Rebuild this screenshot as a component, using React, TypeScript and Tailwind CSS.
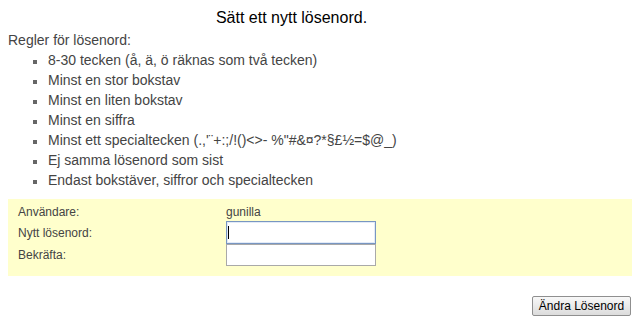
import React from "react";

const RULES = [
  "8-30 tecken (å, ä, ö räknas som två tecken)",
  "Minst en stor bokstav",
  "Minst en liten bokstav",
  "Minst en siffra",
  "Minst ett specialtecken (.,'¨+:;/!()<>- %\"#&¤?*§£½=$@_)",
  "Ej samma lösenord som sist",
  "Endast bokstäver, siffror och specialtecken",
];

export default function App() {
  return (
    <div className="min-h-screen bg-white font-['Liberation_Sans',Arial,sans-serif] text-[#444]">
      {/* Title */}
      <div className="w-[583px] pt-[8px] pb-[2px] text-center text-[16px] leading-[20px] text-black">
        Sätt ett nytt lösenord.
      </div>

      <div className="pl-[8px] pr-[11px]">
        <div className="text-[14px] leading-[20px]">Regler för lösenord:</div>
        <ul className="pl-[25px] text-[14px] leading-[20px]">
          {RULES.map((r) => (
            <li key={r} className="flex items-center">
              <span className="mt-[3px] mr-[11px] h-[4px] w-[4px] shrink-0 bg-[#666]" />
              <span>{r}</span>
            </li>
          ))}
        </ul>

        {/* Form panel */}
        <div className="mt-[9px] bg-[#ffffcc] pl-[10px] pt-[4px] pb-[10px] text-[12px]">
          <div className="flex h-[18px] items-center">
            <div className="w-[208px]">Användare:</div>
            <div>gunilla</div>
          </div>
          <div className="flex h-[23px] items-center">
            <div className="w-[208px]">Nytt lösenord:</div>
            <div className="relative">
              <input
                type="password"
                className="block h-[23px] w-[150px] border border-[#7896c2] bg-white px-[2px] caret-transparent shadow-[inset_0_0_0_1px_#e3ebf7] outline-none"
              />
              <span className="absolute left-[2px] top-[5px] h-[13px] w-px bg-black" />
            </div>
          </div>
          <div className="flex h-[22px] items-center">
            <div className="w-[208px]">Bekräfta:</div>
            <input
              type="password"
              className="block h-[22px] w-[150px] border border-[#a9a9a9] bg-white px-[2px] outline-none"
            />
          </div>
        </div>

        <div className="mt-[20px] flex justify-end pr-[1px]">
          <button className="h-[20px] w-[99px] rounded-[2px] border border-[#8f8f8f] bg-gradient-to-b from-[#f8f8f8] to-[#dcdcdc] text-[12px] leading-[18px] text-black">
            Ändra Lösenord
          </button>
        </div>
      </div>
    </div>
  );
}
